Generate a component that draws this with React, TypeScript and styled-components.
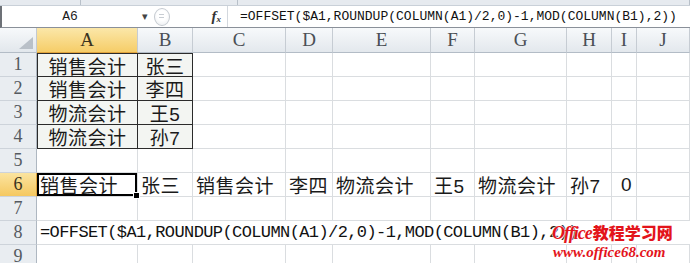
import styled, { createGlobalStyle } from "styled-components";

const GlobalStyle = createGlobalStyle`
  body {
    margin: 0;
    background: #ffffff;
    font-family: "Liberation Sans", "Noto Sans CJK SC", sans-serif;
  }
`;

const COLS = ["A", "B", "C", "D", "E", "F", "G", "H", "I", "J"];

// 1..4 small table, 6 is the OFFSET result row
const table: string[][] = [
  ["销售会计", "张三"],
  ["销售会计", "李四"],
  ["物流会计", "王5"],
  ["物流会计", "孙7"],
];

const row6 = ["销售会计", "张三", "销售会计", "李四", "物流会计", "王5", "物流会计", "孙7", "0", ""];

const FORMULA = "=OFFSET($A1,ROUNDUP(COLUMN(A1)/2,0)-1,MOD(COLUMN(B1),2))";

function App() {
  return (
    <Page>
      <GlobalStyle />
      <TopStrip>
        <StripPart $w={80} />
        <StripPart $w={156} />
        <StripPart />
      </TopStrip>
      <FormulaBar>
        <NameBox>A6</NameBox>
        <DropArrow>▾</DropArrow>
        <RoundButton />
        <FxBox>
          <Fx>
            f<sub>x</sub>
          </Fx>
        </FxBox>
        <FormulaInput>{FORMULA}</FormulaInput>
      </FormulaBar>

      <Sheet>
        <Corner>
          <svg width="14" height="12" viewBox="0 0 14 12">
            <polygon points="14,0 14,12 0,12" fill="#b9c0c8" />
          </svg>
        </Corner>
        {COLS.map((c) => (
          <ColHead key={c} $active={c === "A"}>
            {c}
          </ColHead>
        ))}

        {Array.from({ length: 9 }, (_, i) => {
          const r = i + 1;
          const cells = [];
          cells.push(
            <RowHead key={"h" + r} $active={r === 6}>
              {r}
            </RowHead>
          );
          if (r === 8) {
            cells.push(<OverflowCell key="f8">{FORMULA}</OverflowCell>);
            return cells;
          }
          COLS.forEach((c, ci) => {
            let text = "";
            let boxed = false;
            let align: "left" | "center" | "right" = "left";
            if (r <= 4 && ci < 2) {
              text = table[r - 1][ci];
              boxed = true;
              align = "center";
            }
            if (r === 6) {
              text = row6[ci];
              if (text === "0") align = "right";
            }
            cells.push(
              <Cell
                key={c + r}
                $boxed={boxed}
                $edgeLeft={boxed && ci === 0}
                $edgeTop={boxed && r === 1}
                $align={align}
                $selected={r === 6 && ci === 0}
              >
                {text}
              </Cell>
            );
          });
          return cells;
        })}
      </Sheet>

      <Watermark>
        <WmTop>
          <WmOffice>Office</WmOffice>
          <WmCn>教程学习网</WmCn>
        </WmTop>
        <WmUrl>www.office68.com</WmUrl>
      </Watermark>
    </Page>
  );
}

const Page = styled.div`
  position: relative;
  width: 690px;
  height: 263px;
  overflow: hidden;
  background: #ffffff;
`;

const TopStrip = styled.div`
  display: flex;
  height: 5px;
  background: #e6eaef;
  border-bottom: 1px solid #c9d0d8;
`;

const StripPart = styled.div<{ $w?: number }>`
  flex: ${(p) => (p.$w ? `0 0 ${p.$w}px` : "1")};
  border-right: 1px solid #b8c0c9;
`;

const FormulaBar = styled.div`
  display: flex;
  align-items: center;
  height: 21px;
  background: #ffffff;
  border-left: 2px solid #6d7177;
  border-bottom: 1px solid #8a9099;
`;

const NameBox = styled.div`
  width: 136px;
  text-align: center;
  font-family: "Liberation Mono", monospace;
  font-size: 13px;
  color: #1c1c1c;
`;

const DropArrow = styled.div`
  width: 14px;
  font-size: 11px;
  color: #444;
  text-align: center;
  line-height: 1;
`;

const RoundButton = styled.div`
  width: 14px;
  height: 16px;
  margin-left: 2px;
  border-radius: 50%;
  border: 1px solid #c5cad0;
  background: radial-gradient(circle at 50% 40%, #ffffff 40%, #e8ebef 100%);
  position: relative;
  &::after {
    content: "";
    position: absolute;
    left: 4px;
    top: 5px;
    width: 5px;
    height: 2px;
    border-top: 1px solid #c8cdd3;
    border-bottom: 1px solid #c8cdd3;
  }
`;

const FxBox = styled.div`
  width: 58px;
  height: 100%;
  display: flex;
  align-items: center;
  justify-content: flex-end;
  padding-right: 6px;
  box-sizing: border-box;
  border-right: 1px solid #d3d8de;
`;

const Fx = styled.span`
  font-family: "Liberation Serif", serif;
  font-style: italic;
  font-weight: bold;
  font-size: 15px;
  color: #333;
  sub {
    font-size: 9px;
    vertical-align: -1px;
  }
`;

const FormulaInput = styled.div`
  flex: 1;
  padding-left: 12px;
  font-family: "Liberation Mono", monospace;
  font-size: 13px;
  color: #111;
  white-space: nowrap;
`;

const Sheet = styled.div`
  display: grid;
  grid-template-columns: 37px 101px 55px 93px 47px 98px 44px 92px 45px 25px 53px;
  grid-template-rows: 25px repeat(9, 24px);
  width: 690px;
`;

const Corner = styled.div`
  display: flex;
  align-items: flex-end;
  justify-content: flex-end;
  padding: 0 3px 3px 0;
  box-sizing: border-box;
  background: linear-gradient(#f7f9fb, #e2e7ec);
  border-right: 1px solid #c3c9d0;
  border-bottom: 1px solid #b3bcc6;
`;

const ColHead = styled.div<{ $active?: boolean }>`
  display: flex;
  align-items: center;
  justify-content: center;
  box-sizing: border-box;
  font-family: "Liberation Serif", serif;
  font-size: 19px;
  color: ${(p) => (p.$active ? "#3a3320" : "#4a4f55")};
  background: ${(p) =>
    p.$active
      ? "linear-gradient(#fbe7a9, #f6cd68)"
      : "linear-gradient(#f7f9fb, #e3e8ed)"};
  border-right: 1px solid #c6ccd3;
  border-bottom: 1px solid ${(p) => (p.$active ? "#e1a43c" : "#b3bcc6")};
`;

const RowHead = styled.div<{ $active?: boolean }>`
  display: flex;
  align-items: center;
  justify-content: center;
  box-sizing: border-box;
  font-family: "Liberation Serif", serif;
  font-size: 18px;
  color: ${(p) => (p.$active ? "#3a3320" : "#555a60")};
  background: ${(p) =>
    p.$active ? "linear-gradient(#fbe4a0, #f5c860)" : "#e9edf1"};
  border-right: 1px solid ${(p) => (p.$active ? "#e1a43c" : "#aeb7c1")};
  border-bottom: 1px solid #cdd3da;
`;

const Cell = styled.div<{
  $boxed?: boolean;
  $edgeLeft?: boolean;
  $edgeTop?: boolean;
  $align?: "left" | "center" | "right";
  $selected?: boolean;
}>`
  position: relative;
  display: flex;
  align-items: center;
  justify-content: ${(p) =>
    p.$align === "center" ? "center" : p.$align === "right" ? "flex-end" : "flex-start"};
  padding: 0 ${(p) => (p.$align === "right" ? "4px" : "0")} 0
    ${(p) => (p.$align === "left" ? "3px" : "0")};
  box-sizing: border-box;
  white-space: nowrap;
  font-size: 19px;
  letter-spacing: 0.5px;
  color: #1a1a1a;
  background: ${(p) => (p.$boxed ? "#f3f5f2" : "transparent")};
  border-right: 1px solid ${(p) => (p.$boxed ? "#2b2b2b" : "#dadde0")};
  border-bottom: 1px solid ${(p) => (p.$boxed ? "#2b2b2b" : "#dadde0")};
  border-left: ${(p) => (p.$edgeLeft ? "1px solid #2b2b2b" : "none")};
  border-top: ${(p) => (p.$edgeTop ? "1px solid #2b2b2b" : "none")};
  box-shadow: ${(p) => (p.$selected ? "inset 0 0 0 2px #000" : "none")};

  ${(p) =>
    p.$selected &&
    `
    &::after {
      content: "";
      position: absolute;
      right: -3px;
      bottom: -3px;
      width: 5px;
      height: 5px;
      background: #000;
      border: 1px solid #fff;
      z-index: 2;
    }
  `}
`;

const OverflowCell = styled.div`
  grid-column: 2 / -1;
  display: flex;
  align-items: center;
  padding-left: 3px;
  box-sizing: border-box;
  white-space: nowrap;
  font-family: "Liberation Mono", monospace;
  font-size: 17px;
  letter-spacing: -0.6px;
  color: #111;
  border-bottom: 1px solid #dadde0;
`;

const Watermark = styled.div`
  position: absolute;
  left: 552px;
  top: 222px;
  display: flex;
  flex-direction: column;
  color: #e3141b;
  text-shadow: 0 0 2px #fff, 0 0 2px #fff;
`;

const WmTop = styled.div`
  display: flex;
  align-items: baseline;
  line-height: 20px;
`;

const WmOffice = styled.span`
  font-family: "Liberation Serif", serif;
  font-style: italic;
  font-weight: bold;
  font-size: 18px;
  letter-spacing: -1px;
`;

const WmCn = styled.span`
  font-family: "Noto Sans CJK SC", sans-serif;
  font-weight: 900;
  font-size: 16px;
  margin-left: 1px;
`;

const WmUrl = styled.span`
  font-family: "Liberation Serif", serif;
  font-style: italic;
  font-weight: bold;
  font-size: 15px;
  line-height: 18px;
  margin-left: 1px;
`;

export default App;
